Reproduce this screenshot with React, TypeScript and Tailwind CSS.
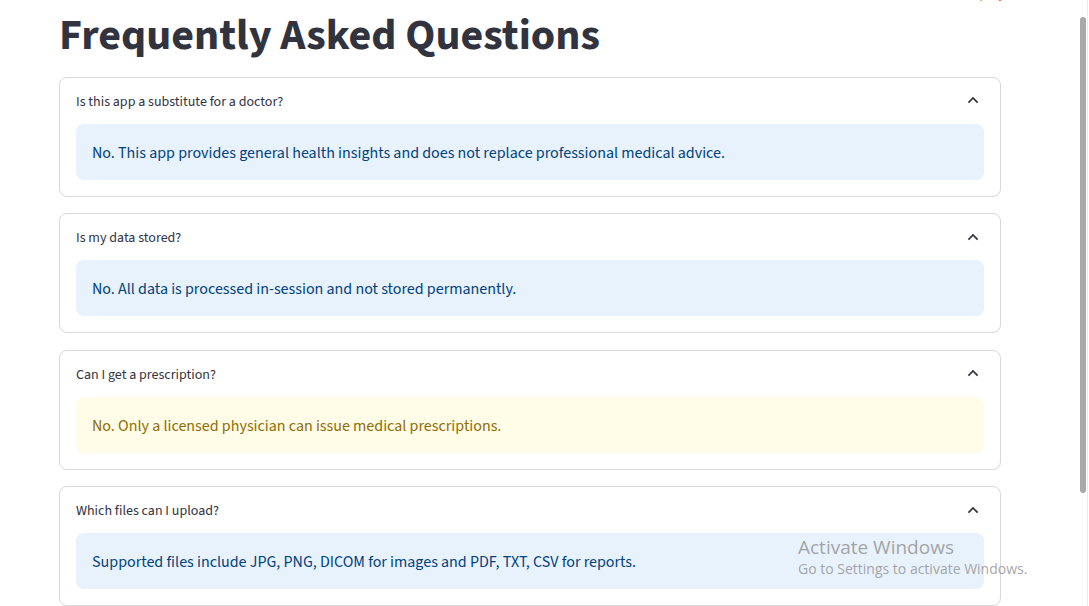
import React from "react";

type Faq = {
  question: string;
  answer: string;
  tone: "info" | "warning";
};

const faqs: Faq[] = [
  {
    question: "Is this app a substitute for a doctor?",
    answer: "No. This app provides general health insights and does not replace professional medical advice.",
    tone: "info",
  },
  {
    question: "Is my data stored?",
    answer: "No. All data is processed in-session and not stored permanently.",
    tone: "info",
  },
  {
    question: "Can I get a prescription?",
    answer: "No. Only a licensed physician can issue medical prescriptions.",
    tone: "warning",
  },
  {
    question: "Which files can I upload?",
    answer: "Supported files include JPG, PNG, DICOM for images and PDF, TXT, CSV for reports.",
    tone: "info",
  },
];

const ChevronUp = () => (
  <svg width="16" height="16" viewBox="0 0 24 24" fill="none" className="text-[#31333f]">
    <path d="M6 15l6-6 6 6" stroke="currentColor" strokeWidth="2.6" strokeLinecap="square" />
  </svg>
);

const FaqCard = ({ faq }: { faq: Faq }) => (
  <div className="rounded-lg border border-[#d9d9dc] bg-white px-4 pt-[14px] pb-4">
    <div className="flex items-center justify-between h-5">
      <span className="text-[14px] leading-5 text-[#31333f]">{faq.question}</span>
      <span className="mr-[3px] mb-[3px] flex items-center">
        <ChevronUp />
      </span>
    </div>
    <div
      className={
        faq.tone === "info"
          ? "mt-[12px] rounded-lg bg-[#e8f2fc] px-4 pt-[17px] pb-[15px] text-[16px] leading-6 text-[#004280]"
          : "mt-[12px] rounded-lg bg-[#fffce7] px-4 pt-[17px] pb-[15px] text-[16px] leading-6 text-[#926c05]"
      }
    >
      {faq.answer}
    </div>
  </div>
);

export default function App() {
  return (
    <div
      className="relative flex h-[606px] w-full overflow-hidden bg-white"
      style={{ fontFamily: "'Source Sans Pro', 'Source Sans 3', Lato, 'Noto Sans', sans-serif" }}
    >
      <main className="flex-1 flex flex-col">
        {/* toolbar scrolled out of view */}
        <div className="h-[3px] overflow-hidden flex justify-end pr-[36px]">
          <div className="-mt-[14px] flex items-center gap-6 text-[14px] text-[#31333f]">
            <span className="text-[#ff6c37]">Deploy</span>
            <span className="font-bold">⋮</span>
          </div>
        </div>

        <div className="pl-[59px] w-[1001px]">
          <h1 className="mt-[3px] text-[44px] leading-[60px] font-bold text-[#31333f]">
            Frequently Asked Questions
          </h1>

          <div className="mt-[11px] flex flex-col gap-[16.4px]">
            {faqs.map((faq) => (
              <FaqCard key={faq.question} faq={faq} />
            ))}
          </div>
        </div>
      </main>

      {/* scrollbar */}
      <div className="w-[10px] flex">
        <div className="w-[8px] pt-[17px] flex justify-center">
          <div className="w-[6px] h-[476px] rounded-full bg-[#a8a8ad]" />
        </div>
        <div className="w-[1px] bg-[#ebebeb]" />
        <div className="w-[1px] bg-white" />
      </div>

      {/* OS watermark over the page */}
      <div
        className="absolute left-[798px] top-[535px] flex flex-col text-[#8f8f8f]/80"
        style={{ fontFamily: "'Open Sans', 'Noto Sans', sans-serif" }}
      >
        <span className="text-[19px] leading-6">Activate Windows</span>
        <span className="text-[14px] leading-5">Go to Settings to activate Windows.</span>
      </div>
    </div>
  );
}
